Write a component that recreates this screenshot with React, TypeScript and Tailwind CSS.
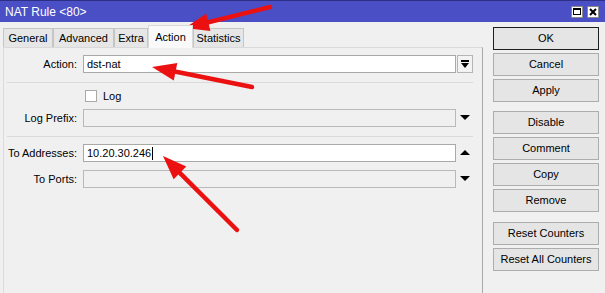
import React from "react";

type Pt = [number, number];

function Arrow({ tip, tail }: { tip: Pt; tail: Pt }) {
  const dx = tail[0] - tip[0];
  const dy = tail[1] - tip[1];
  const len = Math.sqrt(dx * dx + dy * dy);
  const ux = dx / len;
  const uy = dy / len;
  const L = 24;
  const W = 9;
  const bx = tip[0] + ux * L;
  const by = tip[1] + uy * L;
  const px = -uy;
  const py = ux;
  const p1 = `${tip[0]},${tip[1]}`;
  const p2 = `${bx + px * W},${by + py * W}`;
  const p3 = `${bx - px * W},${by - py * W}`;
  return (
    <g>
      <line
        x1={bx - ux * 2}
        y1={by - uy * 2}
        x2={tail[0]}
        y2={tail[1]}
        stroke="#ec1111"
        strokeWidth={4.5}
        strokeLinecap="round"
      />
      <polygon points={`${p1} ${p2} ${p3}`} fill="#ec1111" />
    </g>
  );
}

function Tab({ label, w, active }: { label: string; w: string; active?: boolean }) {
  if (active) {
    return (
      <div
        className={`${w} h-[23px] -mb-px bg-[#f9f9f9] border border-b-0 border-[#d9d9d9] flex items-center justify-center relative z-10`}
      >
        {label}
      </div>
    );
  }
  return (
    <div
      className={`${w} h-[19px] bg-[#e6e6e6] border border-b-0 border-[#c5c5c5] flex items-center justify-center`}
    >
      {label}
    </div>
  );
}

function TriDown() {
  return (
    <svg width="10" height="6" viewBox="0 0 10 6">
      <polygon points="0,0 10,0 5,5" fill="#000" />
    </svg>
  );
}
function TriUp() {
  return (
    <svg width="10" height="6" viewBox="0 0 10 6">
      <polygon points="0,5 10,5 5,0" fill="#000" />
    </svg>
  );
}

function Btn({ label, def, cls }: { label: string; def?: boolean; cls?: string }) {
  return (
    <div
      className={`w-[106px] h-[23px] flex items-center justify-center bg-[#e5e5e5] border ${
        def ? "border-[#1e1e1e]" : "border-[#adadad]"
      } ${cls ?? ""}`}
    >
      {label}
    </div>
  );
}

export default function App() {
  return (
    <div className="relative w-[605px] h-[293px] overflow-hidden bg-[#f0f0f0] font-['Liberation_Sans',Arial,sans-serif] text-[11px] text-black leading-none">
      {/* Title bar */}
      <div className="h-[22px] bg-[#4b4fc6] border-t border-[#2c2f84] flex items-center pl-[5px] pr-[6px]">
        <span className="text-white text-[12px]">NAT Rule &lt;80&gt;</span>
        <div className="ml-auto flex items-center gap-[4px]">
          <div className="w-[12px] h-[12px] bg-white border border-[#8a8a8a] flex items-center justify-center">
            <div className="w-[8px] h-[7px] border border-black border-t-2" />
          </div>
          <div className="w-[12px] h-[12px] bg-white border border-[#8a8a8a] flex items-center justify-center">
            <svg width="8" height="8" viewBox="0 0 8 8">
              <path d="M1 1 L7 7 M7 1 L1 7" stroke="#000" strokeWidth="2" />
            </svg>
          </div>
        </div>
      </div>

      <div className="flex">
        {/* Left */}
        <div className="w-[483px] pl-[3px] pt-[3px] flex flex-col h-[271px]">
          <div className="flex items-end h-[22px]">
            <Tab label="General" w="w-[50px]" />
            <Tab label="Advanced" w="w-[61px]" />
            <Tab label="Extra" w="w-[34px]" />
            <Tab label="Action" w="w-[45px]" active />
            <Tab label="Statistics" w="w-[51px]" />
          </div>
          <div className="flex-1 border-t border-l border-r border-t-[#d9d9d9] border-l-[#dcdcdc] border-r-[#a9a9a9] flex flex-col">
            {/* Action */}
            <div className="flex items-center mt-[7px]">
              <div className="w-[73px] text-right">Action:</div>
              <div className="ml-[6px] w-[373px] h-[18px] bg-white border border-[#a9a9a9] flex items-center pl-[3px]">
                dst-nat
              </div>
              <div className="ml-[1px] w-[16px] h-[18px] bg-[#f3f3f3] border border-[#b5b5b5] flex flex-col items-center justify-center">
                <div className="w-[8px] h-[2px] bg-black mb-[1px]" />
                <svg width="8" height="5" viewBox="0 0 8 5">
                  <polygon points="0,0 8,0 4,5" fill="#000" />
                </svg>
              </div>
            </div>
            <div className="mt-[9px] ml-[3px] w-[466px] h-px bg-[#dadada]" />
            {/* Log */}
            <div className="flex items-center mt-[7px] h-[12px]">
              <div className="ml-[81px] w-[12px] h-[12px] bg-white border border-[#a9a9a9]" />
              <span className="ml-[6px]">Log</span>
            </div>
            {/* Log Prefix */}
            <div className="flex items-center mt-[7px]">
              <div className="w-[73px] text-right">Log Prefix:</div>
              <div className="ml-[6px] w-[373px] h-[18px] bg-[#f0f0f0] border border-[#b9b9b9]" />
              <div className="ml-[1px] w-[16px] h-[18px] flex items-center justify-center">
                <TriDown />
              </div>
            </div>
            <div className="mt-[9px] ml-[3px] w-[466px] h-px bg-[#dadada]" />
            {/* To Addresses */}
            <div className="flex items-center mt-[7px]">
              <div className="w-[73px] text-right">To Addresses:</div>
              <div className="ml-[6px] w-[373px] h-[18px] bg-white border border-[#a9a9a9] flex items-center pl-[3px]">
                10.20.30.246
                <span className="ml-px w-px h-[13px] bg-black" />
              </div>
              <div className="ml-[1px] w-[16px] h-[18px] flex items-center justify-center">
                <TriUp />
              </div>
            </div>
            {/* To Ports */}
            <div className="flex items-center mt-[8px]">
              <div className="w-[73px] text-right">To Ports:</div>
              <div className="ml-[6px] w-[373px] h-[18px] bg-[#f0f0f0] border border-[#b9b9b9]" />
              <div className="ml-[1px] w-[16px] h-[18px] flex items-center justify-center">
                <TriDown />
              </div>
            </div>
          </div>
        </div>

        {/* Right buttons */}
        <div className="pl-[10px] pt-[5px] flex flex-col">
          <Btn label="OK" def />
          <Btn label="Cancel" cls="mt-[3px]" />
          <Btn label="Apply" cls="mt-[3px]" />
          <Btn label="Disable" cls="mt-[9px]" />
          <Btn label="Comment" cls="mt-[3px]" />
          <Btn label="Copy" cls="mt-[3px]" />
          <Btn label="Remove" cls="mt-[3px]" />
          <Btn label="Reset Counters" cls="mt-[10px]" />
          <Btn label="Reset All Counters" cls="mt-[3px]" />
        </div>
      </div>

      {/* Red annotation arrows */}
      <svg className="absolute inset-0 pointer-events-none" width="605" height="293" viewBox="0 0 605 293">
        <Arrow tip={[185, 28]} tail={[270, 7]} />
        <Arrow tip={[152, 67]} tail={[252, 87]} />
        <Arrow tip={[163, 156]} tail={[237, 230]} />
      </svg>
    </div>
  );
}
